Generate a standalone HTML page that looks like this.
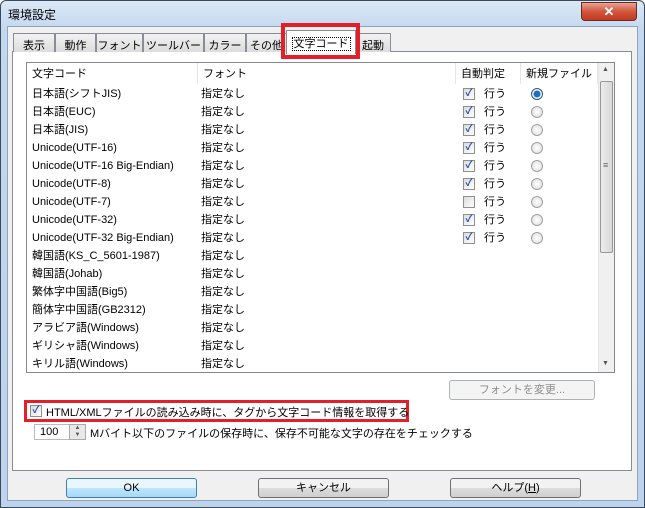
<!DOCTYPE html>
<html><head><meta charset="utf-8"><style>
*{margin:0;padding:0;box-sizing:border-box}
body{width:645px;height:508px;overflow:hidden;font-family:"Liberation Sans","Noto Sans CJK JP",sans-serif;font-size:11px;color:#000;background:#fff}
.win{position:absolute;left:0;top:0;width:645px;height:508px;background:linear-gradient(#dbe8f6,#c3d7ee 30px,#bed3ec);border:1px solid #3a4a5e;border-radius:6px 6px 0 0}
.title{position:absolute;left:7px;top:5px;font-size:12px}
.close{position:absolute;left:580px;top:1px;width:56px;height:19px;border:1px solid #6b2a22;border-radius:0 0 4px 4px;background:linear-gradient(#e8a493,#d1553c 50%,#c13a20);color:#fff;font-weight:bold;text-align:center;font-size:13px;line-height:17px}
.body{position:absolute;left:7px;top:26px;width:631px;height:475px;background:#f0f0f0;border:1px solid #8ea3bd}
.abs{position:absolute}
.tab{position:absolute;top:33px;height:19px;border:1px solid #898c95;border-bottom:none;background:linear-gradient(#f2f2f2,#dcdcdc);padding-top:3px;text-align:center;font-size:11px;white-space:nowrap;overflow:hidden}
.panel{position:absolute;left:12px;top:51px;width:620px;height:420px;background:#fff;border:1px solid #898c95}
.list{position:absolute;left:26px;top:62px;width:589px;height:311px;border:1px solid #828790;background:#fff}
.row{position:absolute;left:0;height:18px;line-height:18px;white-space:nowrap}
.cb{position:absolute;width:12px;height:12px;border:1px solid #8e8f8f;background:linear-gradient(135deg,#dcdcdc,#fff);color:#2a4fa8;font-size:10px;line-height:10px;text-align:center;font-weight:bold}
.rd{position:absolute;width:12px;height:12px;border-radius:50%;border:1px solid #a0a0a0;background:radial-gradient(#fff,#dcdcdc)}
.btn{position:absolute;top:478px;width:131px;height:20px;border:1px solid #707070;border-radius:3px;background:linear-gradient(#f2f2f2 50%,#dddddd 50%,#cfcfcf);text-align:center;line-height:18px}
.hd{position:absolute;top:0;height:21px;border-right:1px solid #e5e5e5;line-height:22px;padding-left:5px;white-space:nowrap}
</style></head><body>
<div class="win">
<div class="title">環境設定</div>
<div class="close">✕</div>
</div>
<div class="body"></div>
<div class="panel"></div>
<div class="tab" style="left:13px;width:42px">表示</div>
<div class="tab" style="left:55px;width:41px">動作</div>
<div class="tab" style="left:96px;width:47px">フォント</div>
<div class="tab" style="left:143px;width:61px">ツールバー</div>
<div class="tab" style="left:204px;width:42px">カラー</div>
<div class="tab" style="left:246px;width:41px">その他</div>
<div class="tab" style="left:355px;width:36px">起動</div>
<div class="tab" style="left:286px;width:70px;top:30px;height:24px;background:#fff;z-index:2;padding-top:4px"><span style="border:1px dotted #000;padding:0 1px">文字コード</span></div>
<div class="abs" style="left:281px;top:23px;width:79px;height:36px;border:4px solid #e3202a;z-index:3"></div>

<div class="list">
<div class="hd" style="left:0;width:171px">文字コード</div>
<div class="hd" style="left:171px;width:258px">フォント</div>
<div class="hd" style="left:429px;width:65px">自動判定</div>
<div class="hd" style="left:494px;width:77px">新規ファイル</div>
<div class="abs" style="left:571px;top:0;width:16px;height:309px;background:#f0f0f0;border-left:1px solid #e6e6e6"></div>
<div class="abs" style="left:573px;top:18px;width:13px;height:172px;border:1px solid #989898;border-radius:2px;background:linear-gradient(90deg,#ececec,#d8d8d8)"></div>
<div class="abs" style="left:575px;top:3px;font-size:7px;color:#555">▲</div>
<div class="abs" style="left:575px;top:297px;font-size:7px;color:#555">▼</div>
<div class="abs" style="left:576px;top:97px;font-size:9px;color:#666">≡</div>
</div>
<div id="rows" class="abs" style="left:32px;top:85px"></div>
<script>
var r=[["日本語(シフトJIS)",1,1],["日本語(EUC)",1,0],["日本語(JIS)",1,0],["Unicode(UTF-16)",1,0],["Unicode(UTF-16 Big-Endian)",1,0],["Unicode(UTF-8)",1,0],["Unicode(UTF-7)",0,0],["Unicode(UTF-32)",1,0],["Unicode(UTF-32 Big-Endian)",1,0],["韓国語(KS_C_5601-1987)"],["韓国語(Johab)"],["繁体字中国語(Big5)"],["簡体字中国語(GB2312)"],["アラビア語(Windows)"],["ギリシャ語(Windows)"],["キリル語(Windows)"]];
var h="";r.forEach(function(x,i){var y=i*18;h+='<div class="row" style="top:'+y+'px">'+x[0]+'</div><div class="row" style="top:'+y+'px;left:169px">指定なし</div>';
if(x.length>1){h+='<div class="cb" style="left:431px;top:'+(y+3)+'px">'+(x[1]?'✓':'')+'</div><div class="row" style="top:'+y+'px;left:452px">行う</div><div class="rd" style="left:499px;top:'+(y+3)+'px;'+(x[2]?'background:radial-gradient(circle,#1f6fb8 0,#1f6fb8 3px,#fff 4px,#ddd 6px);border-color:#2b5a8a':'')+'"></div>';}});
document.getElementById('rows').innerHTML=h;
</script>
<div class="abs" style="left:449px;top:380px;width:146px;height:20px;border:1px solid #adb2b5;border-radius:3px;background:#f4f4f4;color:#8d8d8d;text-align:center;line-height:18px">フォントを変更...</div>
<div class="abs" style="left:24px;top:400px;width:385px;height:22px;border:3px solid #e3202a"></div>
<div class="cb" style="left:30px;top:405px">✓</div>
<div class="abs" style="left:46px;top:404px;white-space:nowrap">HTML/XMLファイルの読み込み時に、タグから文字コード情報を取得する</div>
<div class="abs" style="left:34px;top:424px;width:36px;height:16px;border:1px solid #bbb;background:#fff;padding-left:5px;line-height:14px">100</div>
<div class="abs" style="left:69px;top:424px;width:17px;height:16px;border:1px solid #aaa;background:#e8e8e8;font-size:6px;line-height:7px;text-align:center;color:#555">▲<br>▼</div>
<div class="abs" style="left:90px;top:425px;white-space:nowrap">Mバイト以下のファイルの保存時に、保存不可能な文字の存在をチェックする</div>
<div class="btn" style="left:66px;border-color:#3c7fb1;background:linear-gradient(#eaf6fd 50%,#bee6fd 50%,#a7d9f5)">OK</div>
<div class="btn" style="left:258px">キャンセル</div>
<div class="btn" style="left:450px">ヘルプ(<u>H</u>)</div>
</body></html>
